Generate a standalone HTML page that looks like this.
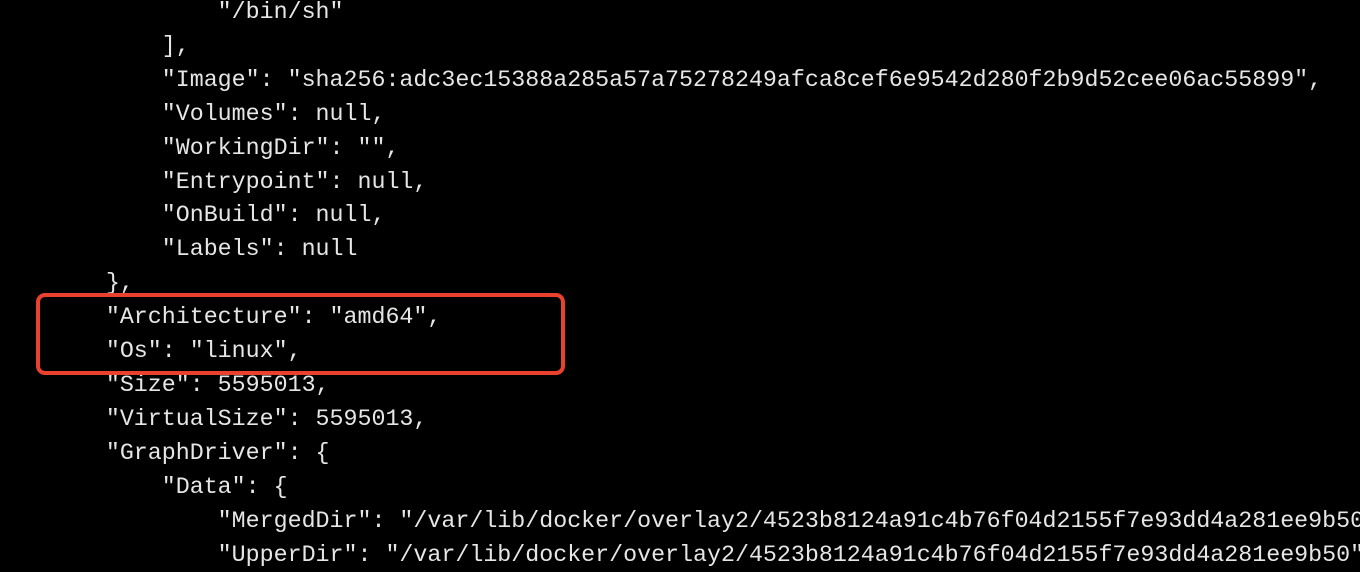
<!DOCTYPE html>
<html><head><meta charset="utf-8"><style>
html,body{margin:0;padding:0;background:#000;width:1360px;height:550px;overflow:hidden;}
pre{position:absolute;left:-6px;top:-4px;margin:0;font-family:"Liberation Mono",monospace;font-size:23.3px;line-height:33.9px;color:#e6e6e6;white-space:pre;}
.box{position:absolute;left:36px;top:293px;width:521px;height:74px;border:4px solid #e8412e;border-radius:9px;}
</style></head><body>
<pre>                "/bin/sh"
            ],
            "Image": "sha256:adc3ec15388a285a57a75278249afca8cef6e9542d280f2b9d52cee06ac55899",
            "Volumes": null,
            "WorkingDir": "",
            "Entrypoint": null,
            "OnBuild": null,
            "Labels": null
        },
        "Architecture": "amd64",
        "Os": "linux",
        "Size": 5595013,
        "VirtualSize": 5595013,
        "GraphDriver": {
            "Data": {
                "MergedDir": "/var/lib/docker/overlay2/4523b8124a91c4b76f04d2155f7e93dd4a281ee9b50",
                "UpperDir": "/var/lib/docker/overlay2/4523b8124a91c4b76f04d2155f7e93dd4a281ee9b50"</pre>
<div class="box"></div>
</body></html>
